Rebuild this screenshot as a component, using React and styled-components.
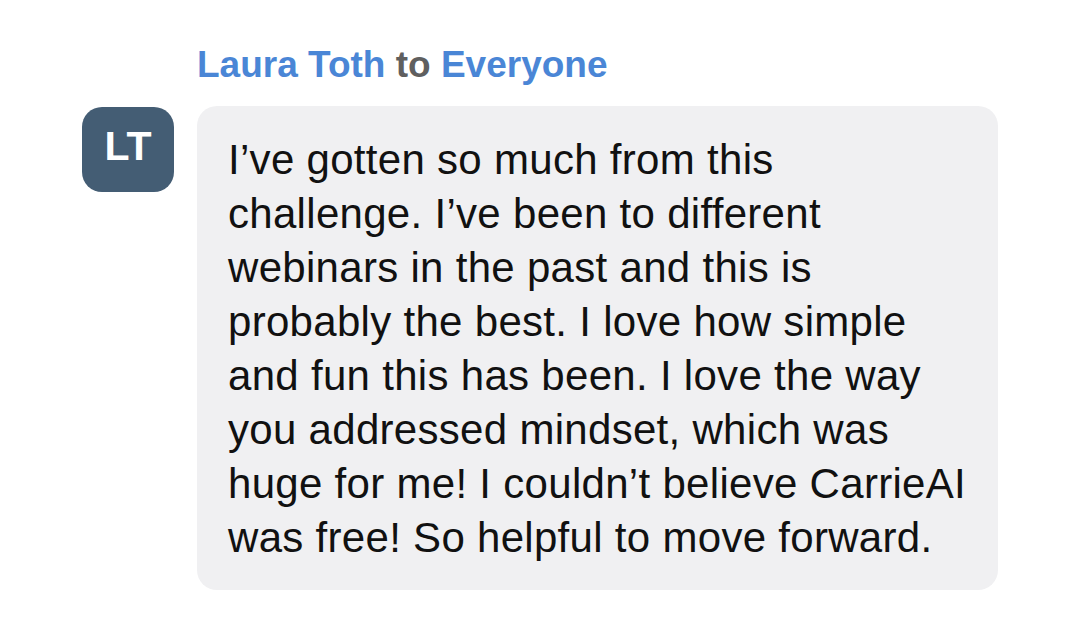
import React from "react";
import styled, { createGlobalStyle } from "styled-components";

const GlobalStyle = createGlobalStyle`
  html, body {
    margin: 0;
    padding: 0;
    background: #ffffff;
    font-family: "Liberation Sans", Arial, Helvetica, sans-serif;
  }
`;

const Page = styled.div`
  width: 1080px;
  height: 630px;
  box-sizing: border-box;
  padding: 42px 0 0 82px;
  background: #ffffff;
`;

const Header = styled.div`
  margin-left: 115px;
  font-size: 37px;
  font-weight: 700;
  line-height: 46px;
  color: #4a86d6;
`;

const Muted = styled.span`
  color: #5f5f5f;
`;

const Row = styled.div`
  display: flex;
  align-items: flex-start;
  gap: 23px;
  margin-top: 18px;
`;

const Avatar = styled.div`
  width: 92px;
  height: 85px;
  margin-top: 1px;
  flex-shrink: 0;
  border-radius: 20px;
  background: #445d74;
  color: #ffffff;
  display: flex;
  align-items: center;
  justify-content: center;
  font-size: 41px;
  font-weight: 700;
  padding-bottom: 6px;
  box-sizing: border-box;
`;

const Bubble = styled.div`
  width: 801px;
  box-sizing: border-box;
  padding: 27px 30px 25px 31px;
  background: #f0f0f2;
  border-radius: 20px;
  color: #111111;
  font-size: 42px;
  line-height: 54px;
  letter-spacing: 0.3px;
`;

const Line = styled.div`
  white-space: nowrap;
`;

const lines = [
  "I’ve gotten so much from this",
  "challenge. I’ve been to different",
  "webinars in the past and this is",
  "probably the best. I love how simple",
  "and fun this has been. I love the way",
  "you addressed mindset, which was",
  "huge for me! I couldn’t believe CarrieAI",
  "was free! So helpful to move forward.",
];

const App = () => {
  return (
    <Page>
      <GlobalStyle />
      <Header>
        Laura Toth <Muted>to</Muted> Everyone
      </Header>
      <Row>
        <Avatar>LT</Avatar>
        <Bubble>
          {lines.map((l) => (
            <Line key={l}>{l}</Line>
          ))}
        </Bubble>
      </Row>
    </Page>
  );
};

export default App;
